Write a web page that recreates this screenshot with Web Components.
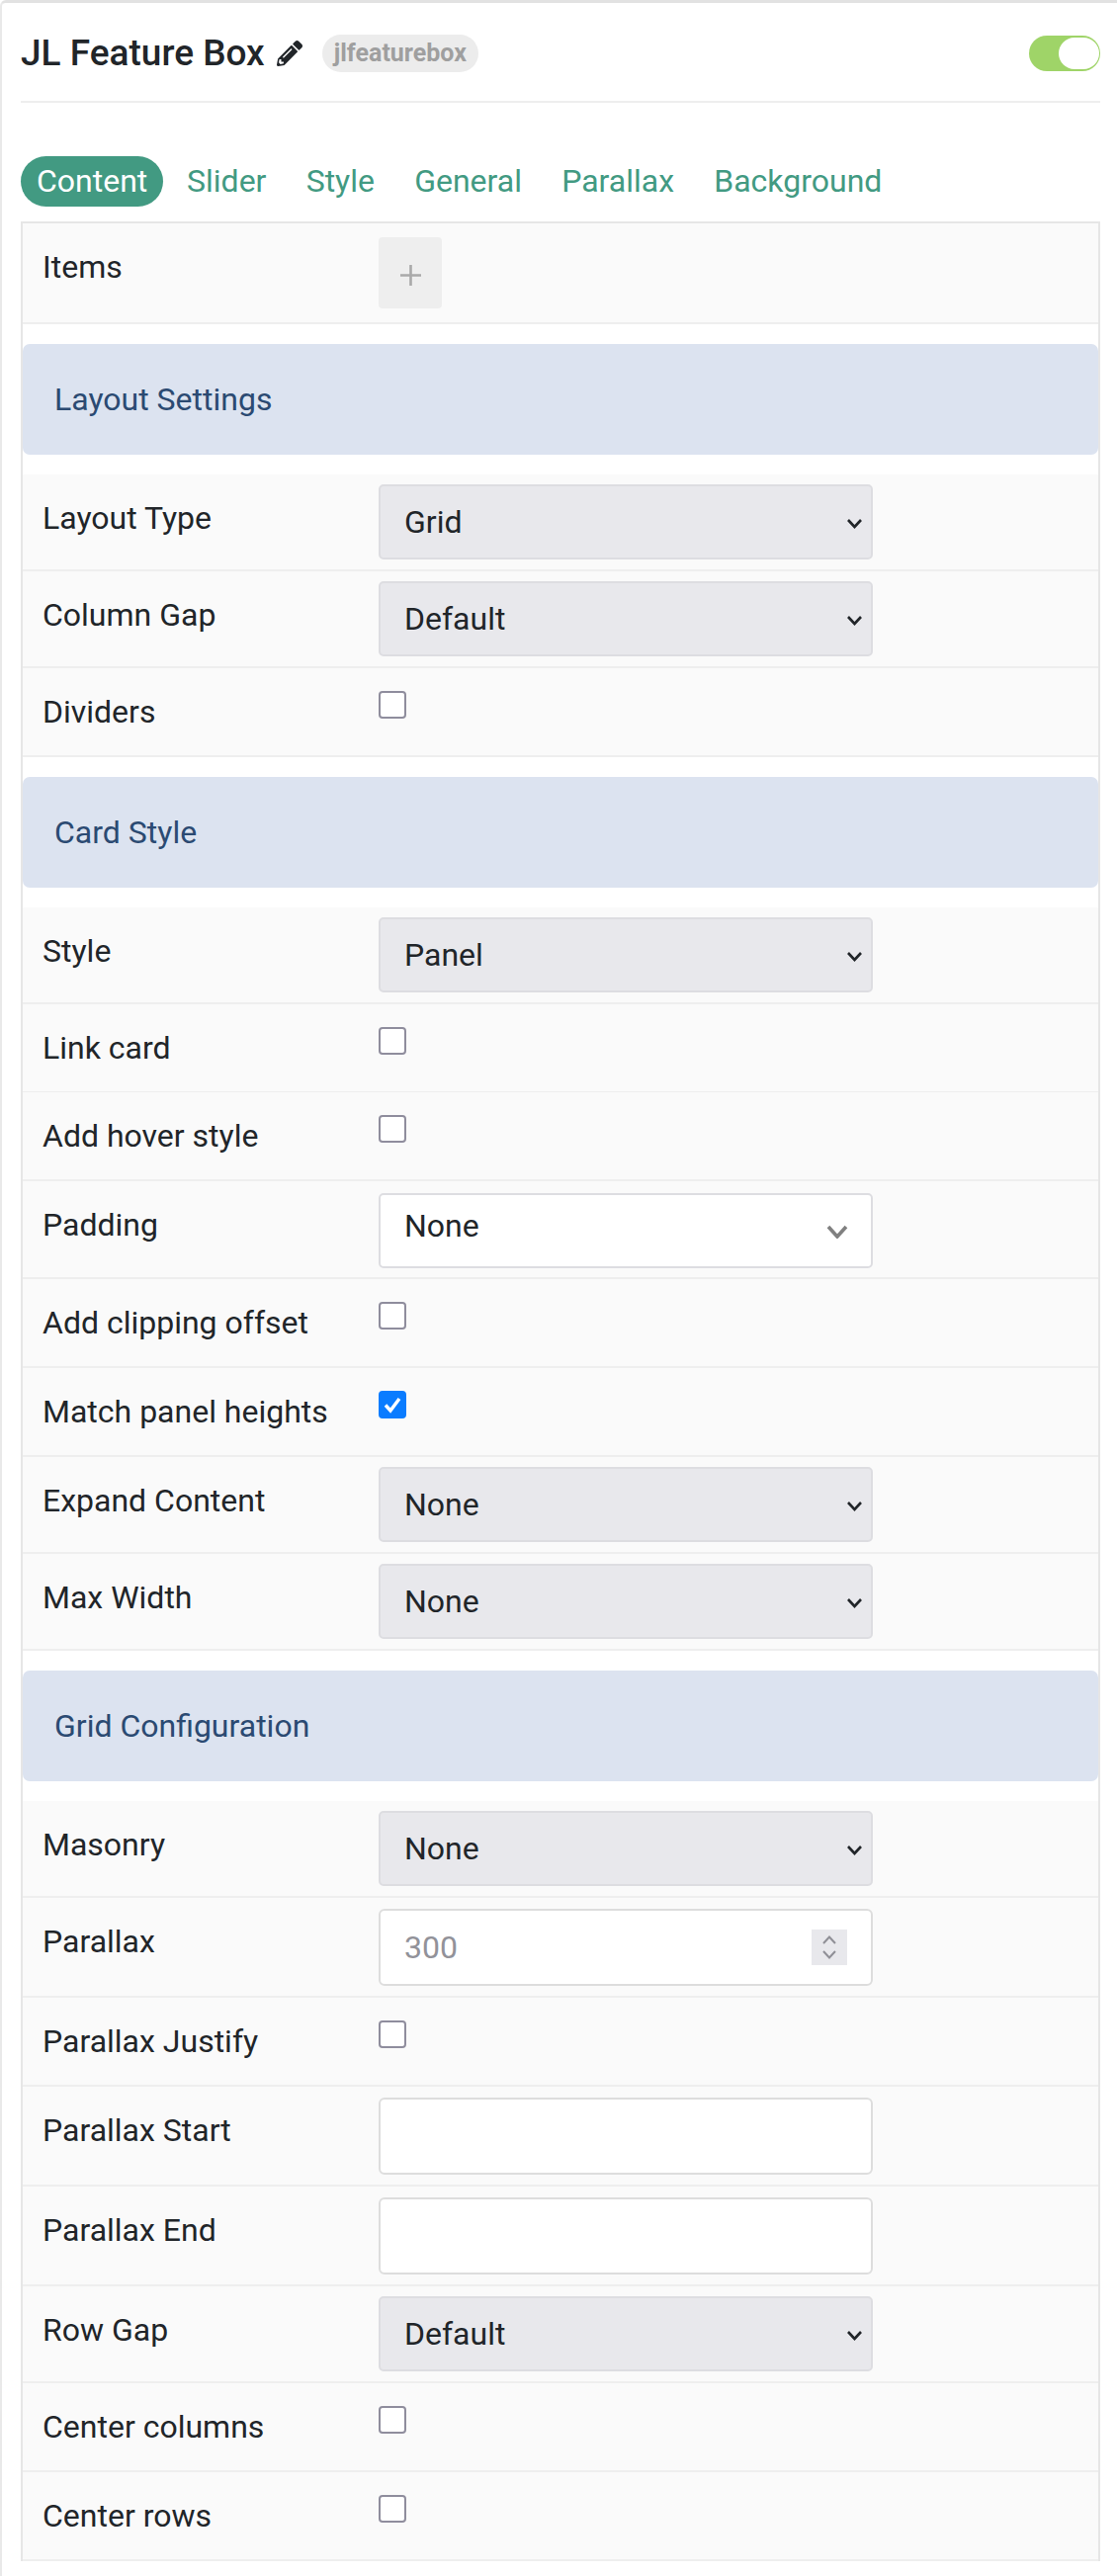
<!DOCTYPE html>
<html>
<head>
<meta charset="utf-8">
<title>JL Feature Box</title>
<style>
    html, body { margin: 0; padding: 0; background: #fff; }
    body { font-family: Roboto, "Liberation Sans", sans-serif; color: #212529; overflow: hidden; height: 2606px; }
</style>
</head>
<body>

<module-panel>
    <panel-header slot="header" name="JL Feature Box" tag="jlfeaturebox"></panel-header>
    <tab-bar slot="tabs" active="Content" items="Content,Slider,Style,General,Parallax,Background"></tab-bar>

    <form-row label="Items" kind="items"><add-button></add-button></form-row>

    <form-section label="Layout Settings"></form-section>
    <form-row label="Layout Type"><select-box value="Grid"></select-box></form-row>
    <form-row label="Column Gap"><select-box value="Default"></select-box></form-row>
    <form-row label="Dividers" kind="check"><check-box></check-box></form-row>

    <form-section label="Card Style"></form-section>
    <form-row label="Style"><select-box value="Panel"></select-box></form-row>
    <form-row label="Link card" kind="check"><check-box></check-box></form-row>
    <form-row label="Add hover style" kind="check" style="margin-top:-1px"><check-box></check-box></form-row>
    <form-row label="Padding" kind="light"><select-box value="None" light></select-box></form-row>
    <form-row label="Add clipping offset" kind="check"><check-box></check-box></form-row>
    <form-row label="Match panel heights" kind="check"><check-box checked></check-box></form-row>
    <form-row label="Expand Content"><select-box value="None"></select-box></form-row>
    <form-row label="Max Width"><select-box value="None"></select-box></form-row>

    <form-section label="Grid Configuration"></form-section>
    <form-row label="Masonry"><select-box value="None"></select-box></form-row>
    <form-row label="Parallax" kind="input"><text-field placeholder="300" spinner></text-field></form-row>
    <form-row label="Parallax Justify" kind="check"><check-box></check-box></form-row>
    <form-row label="Parallax Start" kind="input"><text-field></text-field></form-row>
    <form-row label="Parallax End" kind="input"><text-field></text-field></form-row>
    <form-row label="Row Gap"><select-box value="Default"></select-box></form-row>
    <form-row label="Center columns" kind="check"><check-box></check-box></form-row>
    <form-row label="Center rows" kind="check"><check-box></check-box></form-row>
</module-panel>

<script>
class ModulePanel extends HTMLElement {
    constructor() {
        super()
        this.attachShadow({ mode: "open" }).innerHTML = `
        <style>
            :host {
                display: block;
                box-sizing: border-box;
                height: 2606px;
                border-top: 3px solid #e2e2e2;
                border-left: 2px solid #e9e9e9;
                border-top-left-radius: 6px;
                padding: 0 17px 0 19px;
            }
            .table {
                border: 2px solid #e6e6e6;
                border-bottom: 0;
            }
        </style>
        <slot name="header"></slot>
        <slot name="tabs"></slot>
        <div class="table"><slot></slot></div>
        `
    }
}

class PanelHeader extends HTMLElement {
    constructor() {
        super()
        this.attachShadow({ mode: "open" }).innerHTML = `
        <style>
            :host {
                display: flex;
                align-items: center;
                box-sizing: border-box;
                height: 101px;
                padding-top: 3px;
                border-bottom: 2px solid #eeeeee;
            }
            h1 {
                margin: 0;
                font: 500 37px/40px Roboto, sans-serif;
                color: #212529;
            }
            svg { width: 26px; height: 26px; margin-left: 12px; display: block; }
            .tag {
                margin-left: 20px;
                height: 38px;
                padding: 0 12px;
                border-radius: 19px;
                background: #ececec;
                color: #9f9f9f;
                font: 700 25px/38px Roboto, sans-serif;
            }
            jl-toggle { margin-left: auto; }
        </style>
        <h1>${this.getAttribute("name")}</h1>
        <svg viewBox="0 0 512 512"><path fill="#212529" d="M497.9 142.1l-46.1 46.1c-4.7 4.7-12.3 4.7-17 0l-111-111c-4.7-4.7-4.7-12.3 0-17l46.1-46.1c18.700-18.700 49.100-18.700 67.900 0l60.100 60.100c18.800 18.700 18.800 49.100 0 67.900zM284.200 99.800L21.600 362.400.4 483.900c-2.900 16.400 11.400 30.600 27.800 27.800l121.500-21.300 262.600-262.600c4.700-4.700 4.700-12.300 0-17l-111-111c-4.800-4.700-12.400-4.700-17.100 0zM124.100 339.900c-5.500-5.500-5.500-14.300 0-19.800l154-154c5.500-5.500 14.300-5.500 19.800 0s5.500 14.300 0 19.800l-154 154c-5.500 5.500-14.300 5.500-19.800 0zM88 424h48v36.300l-64.500 11.300-31.100-31.100L51.700 376H88v48z"/></svg>
        <span class="tag">${this.getAttribute("tag")}</span>
        <jl-toggle></jl-toggle>
        `
    }
}

class JlToggle extends HTMLElement {
    constructor() {
        super()
        this.attachShadow({ mode: "open" }).innerHTML = `
        <style>
            :host {
                display: block;
                position: relative;
                box-sizing: border-box;
                width: 72px;
                height: 36px;
                border-radius: 18px;
                background: #9fd468;
            }
            /* knob sits over the track */
            .knob {
                position: absolute;
                top: 2px;
                right: 1px;
                width: 41px;
                height: 32px;
                border-radius: 16px;
                background: #fff;
            }
        </style>
        <div class="knob"></div>
        `
    }
}

class TabBar extends HTMLElement {
    constructor() {
        super()
        const active = this.getAttribute("active")
        const items = this.getAttribute("items").split(",")
        this.attachShadow({ mode: "open" }).innerHTML = `
        <style>
            :host {
                display: flex;
                gap: 7.2px;
                padding: 54px 0 15px;
            }
            a {
                height: 51px;
                padding: 0 16.5px;
                border-radius: 26px;
                font: 400 32px/51px Roboto, sans-serif;
                color: #429a82;
            }
            a.on { background: #429a82; color: #fff; padding: 0 16px; }
        </style>
        ${items.map(t => `<a class="${t === active ? "on" : ""}">${t}</a>`).join("")}
        `
    }
}

class FormSection extends HTMLElement {
    constructor() {
        super()
        this.attachShadow({ mode: "open" }).innerHTML = `
        <style>
            :host {
                display: block;
                margin: 20px 0;
                padding-left: 32px;
                height: 112px;
                border-radius: 7px;
                background: #dce3f0;
                color: #2b4a72;
                font: 400 32px/112px Roboto, sans-serif;
            }
        </style>
        ${this.getAttribute("label")}
        `
    }
}

class FormRow extends HTMLElement {
    constructor() {
        super()
        this.attachShadow({ mode: "open" }).innerHTML = `
        <style>
            :host {
                display: grid;
                grid-template-columns: 340px 1fr;
                align-items: start;
                box-sizing: border-box;
                padding-left: 20px;
                background: #fafafa;
                border-bottom: 2px solid #eeeeee;
                font: 400 32px/44px Roboto, sans-serif;
                color: #212529;
                --pt: 10px;
                --pb: 10px;
            }
            :host([kind="check"]) { --pt: 23px; --pb: 0px; }
            :host([kind="light"]) { --pt: 12px; --pb: 9px; }
            :host([kind="input"]) { --pt: 11px; --pb: 10px; }
            :host([kind="items"]) { --pt: 14px; --pb: 14px; }
            .label { padding: 22px 0 22px; }
            .ctl { padding: var(--pt) 0 var(--pb); }
        </style>
        <div class="label">${this.getAttribute("label")}</div>
        <div class="ctl"><slot></slot></div>
        `
    }
}

class SelectBox extends HTMLElement {
    constructor() {
        super()
        const light = this.hasAttribute("light")
        this.attachShadow({ mode: "open" }).innerHTML = `
        <style>
            :host {
                display: flex;
                justify-content: space-between;
                box-sizing: border-box;
                width: 500px;
                height: 76px;
                padding: 0 8px 0 24px;
                align-items: center;
                border: 2px solid #dddde1;
                border-radius: 5px;
                background: #e8e8ec;
                color: #212529;
                font: 400 32px/40px Roboto, sans-serif;
            }
            :host([light]) {
                background: #fff;
                padding-right: 23px;
            }
            :host([light]) span { margin-bottom: 10px; }
            svg { display: block; margin-top: 2px; }
        </style>
        <span>${this.getAttribute("value")}</span>
        ${light
            ? `<svg width="22" height="14" viewBox="0 0 22 14"><path d="M2 2l9 10 9-10" fill="none" stroke="#808080" stroke-width="3.600"/></svg>`
            : `<svg width="17" height="11" viewBox="0 0 17 11"><path d="M2 2l6.500 7 6.500-7" fill="none" stroke="#212529" stroke-width="2.600"/></svg>`}
        `
    }
}

class TextField extends HTMLElement {
    constructor() {
        super()
        const spinner = this.hasAttribute("spinner")
        this.attachShadow({ mode: "open" }).innerHTML = `
        <style>
            :host {
                display: flex;
                justify-content: space-between;
                align-items: center;
                box-sizing: border-box;
                width: 500px;
                height: 78px;
                padding: 0 24px 0 24px;
                border: 2px solid #dddddd;
                border-radius: 6px;
                background: #fff;
                color: #929299;
                font: 400 32px/40px Roboto, sans-serif;
            }
            .spin {
                display: flex;
                align-items: center;
                justify-content: center;
                width: 36px;
                height: 36px;
                background: #e8e8ec;
            }
            svg { display: block; }
        </style>
        <span>${this.getAttribute("placeholder") || ""}</span>
        ${spinner ? `<div class="spin"><svg width="16" height="26" viewBox="0 0 16 26"><path d="M2 9l6-6.500 6 6.500M2 17l6 6.500 6-6.500" fill="none" stroke="#8f8f96" stroke-width="2"/></svg></div>` : ""}
        `
    }
}

class CheckBox extends HTMLElement {
    constructor() {
        super()
        const on = this.hasAttribute("checked")
        this.attachShadow({ mode: "open" }).innerHTML = `
        <style>
            :host {
                display: block;
                box-sizing: border-box;
                width: 28px;
                height: 28px;
                border: 2px solid #8f8d9d;
                border-radius: 4px;
                background: #fff;
            }
            :host([checked]) { background: #0a7cff; border-color: #0a7cff; }
            svg { display: block; width: 24px; height: 24px; }
        </style>
        ${on ? `<svg viewBox="0 0 24 24"><path d="M5 12.500l5 5.500 9-12" fill="none" stroke="#fff" stroke-width="3.400"/></svg>` : ""}
        `
    }
}

class AddButton extends HTMLElement {
    constructor() {
        super()
        this.attachShadow({ mode: "open" }).innerHTML = `
        <style>
            :host {
                display: flex;
                align-items: center;
                justify-content: center;
                width: 64px;
                height: 72px;
                padding-top: 4px;
                box-sizing: border-box;
                border-radius: 4px;
                background: #eeeeee;
            }
            svg { display: block; }
        </style>
        <svg width="21" height="21" viewBox="0 0 21 21"><path d="M10.500 0v21M0 10.500h21" stroke="#a9a9a9" stroke-width="2.600"/></svg>
        `
    }
}

customElements.define("module-panel", ModulePanel)
customElements.define("panel-header", PanelHeader)
customElements.define("jl-toggle", JlToggle)
customElements.define("tab-bar", TabBar)
customElements.define("form-section", FormSection)
customElements.define("form-row", FormRow)
customElements.define("select-box", SelectBox)
customElements.define("text-field", TextField)
customElements.define("check-box", CheckBox)
customElements.define("add-button", AddButton)
</script>
</body>
</html>
